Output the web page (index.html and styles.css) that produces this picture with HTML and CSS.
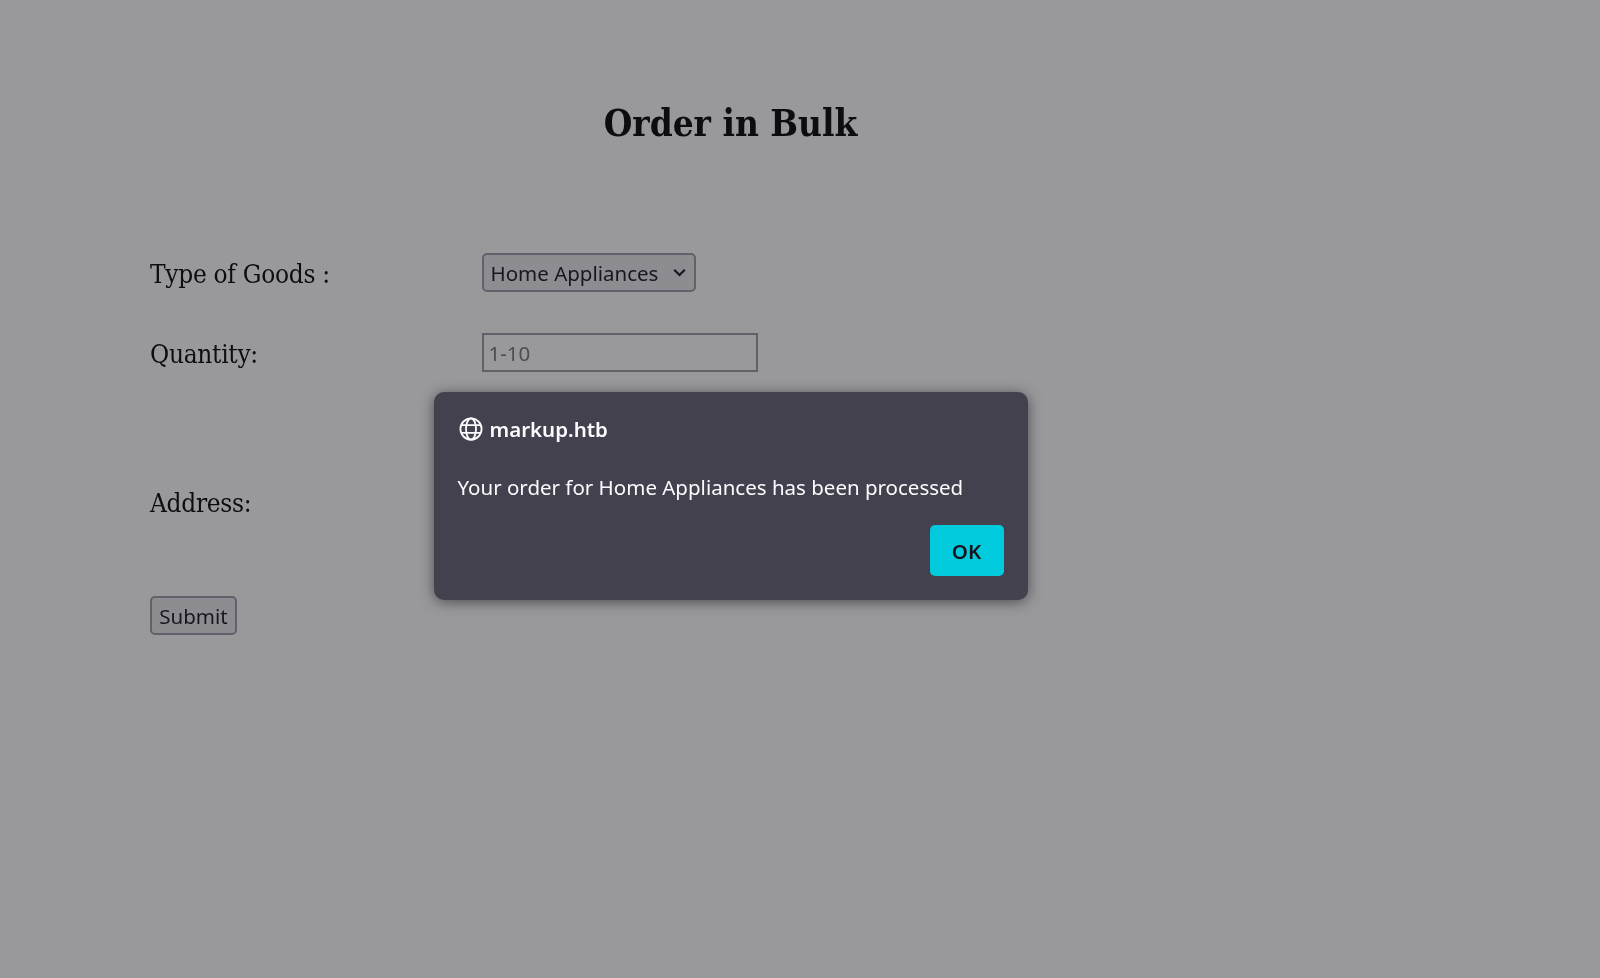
FILE: index.html
```html
<!DOCTYPE html>
<html lang="en">
<head>
<meta charset="utf-8">
<title>Order in Bulk</title>
<link rel="stylesheet" href="styles.css">
</head>
<body>
<main class="page">
  <h1 class="title">Order in Bulk</h1>
  <form class="order-form">
    <label class="field-label">Type of Goods :</label>
    <div class="select-box"><span>Home Appliances</span>
      <svg class="chevron" viewBox="0 0 12 12" width="15" height="15"><path d="M1.8 3.8 6 8 10.2 3.8" fill="none" stroke="currentColor" stroke-width="1.7"/></svg>
    </div>
    <label class="field-label">Quantity:</label>
    <div class="text-input">1-10</div>
    <label class="field-label">Address:</label>
    <div class="address-space"></div>
  </form>
  <button class="submit" type="button">Submit</button>
</main>
<div class="overlay">
  <div class="dialog">
    <div class="dialog-head">
      <svg class="globe" viewBox="0 0 24 24" width="24" height="24" fill="none" stroke="currentColor" stroke-width="1.8">
        <circle cx="12" cy="12" r="10.6"/>
        <ellipse cx="12" cy="12" rx="5" ry="10.6"/>
        <path d="M2 8.2h20M2 15.8h20"/>
      </svg>
      <span>markup.htb</span>
    </div>
    <p class="dialog-msg">Your order for Home Appliances has been processed</p>
    <div class="dialog-actions"><button class="ok" type="button">OK</button></div>
  </div>
</div>
</body>
</html>
```
FILE: styles.css
```css
* { box-sizing: border-box; }
html, body { margin: 0; height: 100%; }
body {
  background: #fff;
  color: #000;
  font-family: "DejaVu Serif Condensed", "DejaVu Serif", serif;
  font-stretch: condensed;
  overflow: hidden;
  filter: blur(0.4px);
}
.page { width: 1461px; padding: 0 0 0 150px; }
.title {
  margin: 0 150px 0 0;
  padding-top: 102px;
  height: 253px;
  text-align: center;
  font-size: 36.6px;
  font-weight: 700;
  line-height: 44px;
}
.order-form {
  display: grid;
  grid-template-columns: 331.5px 1fr;
  grid-template-rows: 39px 39px 176px;
  row-gap: 41px;
  align-items: center;
}
.field-label {
  font-size: 26px;
  line-height: 39px;
  letter-spacing: -0.3px;
  padding-top: 4px;
}
.select-box, .text-input, .submit {
  font-family: "Noto Sans", sans-serif;
  font-stretch: normal;
  font-size: 20.5px;
  border: 2px solid #9b9ba8;
  height: 39px;
}
.select-box {
  width: 214.5px;
  display: flex;
  align-items: center;
  justify-content: space-between;
  padding: 0 7px;
  background: #e9e9ed;
  color: #15141a;
  border-radius: 5px;
}
.chevron { color: #15141a; flex: none; }
.text-input {
  width: 276.5px;
  display: flex;
  align-items: center;
  padding: 0 5px;
  color: #757575;
  background: #fff;
}
.address-space {
  width: 500px;
  height: 176px;
  border: 2px solid #9b9ba8;
}
.submit {
  display: block;
  margin-top: 7px;
  width: 87px;
  padding: 0;
  background: #e9e9ed;
  color: #15141a;
  border-radius: 5px;
}
.overlay {
  position: fixed;
  inset: 0;
  background: rgba(28, 27, 34, 0.45);
  padding: 392px 139px 0 0;
  display: flex;
  justify-content: center;
  align-items: flex-start;
  font-family: "Noto Sans", sans-serif;
  font-stretch: normal;
}
.dialog {
  width: 594px;
  height: 208px;
  padding: 24px;
  background: #42414d;
  color: #fbfbfe;
  border-radius: 10px;
  box-shadow: 0 2px 14px rgba(15, 14, 20, 0.55);
}
.dialog-head {
  display: flex;
  align-items: center;
  gap: 7px;
  height: 26px;
  font-size: 20.5px;
  font-weight: 600;
  line-height: 26px;
}
.globe { flex: none; margin-left: 1px; }
.dialog-msg { margin: 31px 0 0; font-size: 20.5px; line-height: 28px; }
.dialog-actions { display: flex; justify-content: flex-end; margin-top: 24px; }
.ok {
  width: 74px;
  height: 51px;
  border: 0;
  border-radius: 5px;
  background: #00cadb;
  color: #15141a;
  font-family: inherit;
  font-size: 20.5px;
  font-weight: 600;
}
```
